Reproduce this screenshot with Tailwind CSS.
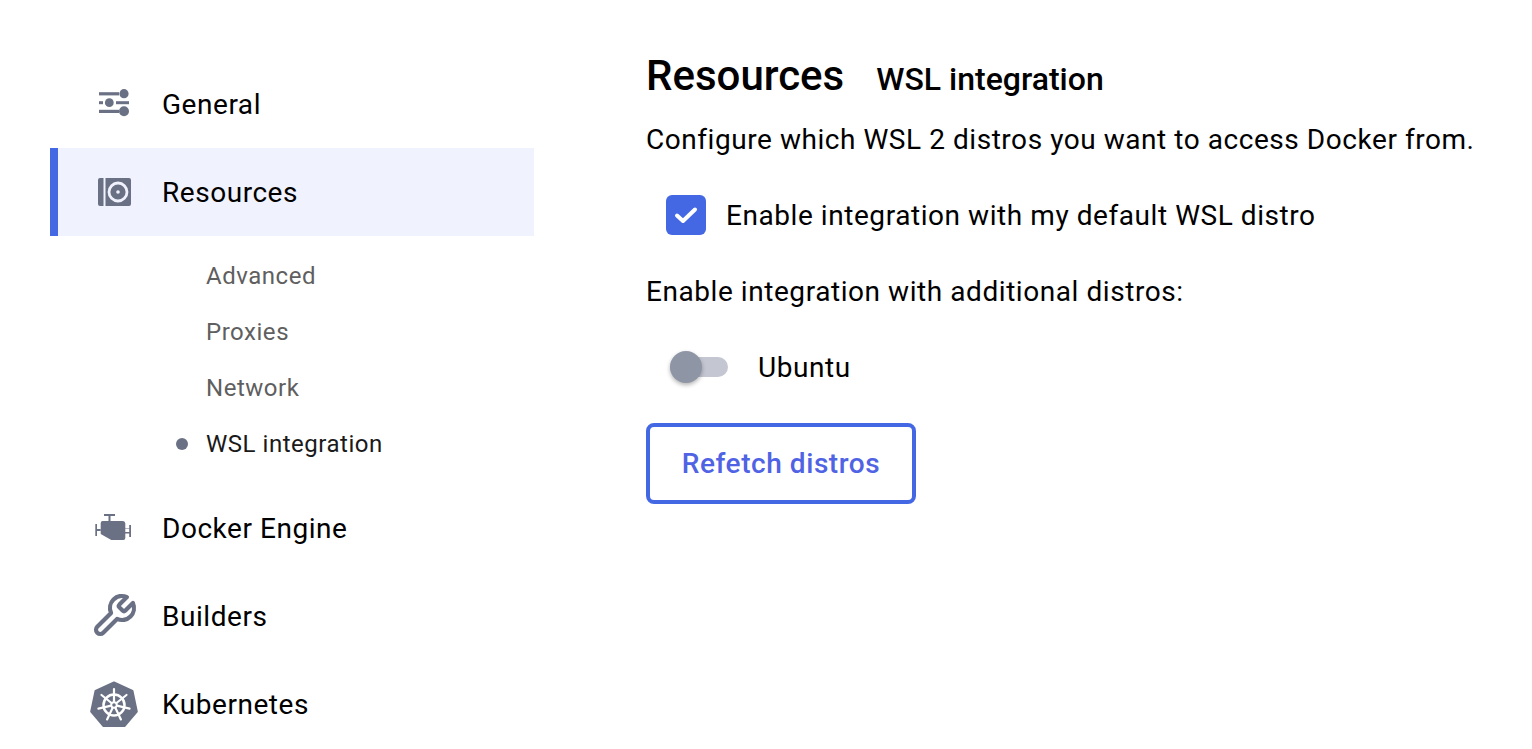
<!DOCTYPE html>
<html><head><meta charset="utf-8">
<script src="https://cdn.jsdelivr.net/npm/@tailwindcss/browser@4"></script>
</head>
<body class="m-0 bg-white overflow-hidden">
<div class="flex h-[749px] w-[1532px] overflow-hidden font-['Roboto',sans-serif] text-black">
  <nav class="ml-[50px] w-[484px] pt-[60px] shrink-0 text-[28px] tracking-[0.54px]">
    <div class="flex items-center h-[88px] pl-[8px]">
      <div class="w-[104px] pl-[32px]">
      <svg class="w-[48px] h-[48px]" viewBox="0 0 48 48" fill="#6b7185"><rect x="9" y="12.200" width="20" height="3.200"/><circle cx="34" cy="13.700" r="4.600"/><rect x="9" y="21.200" width="4" height="3"/><circle cx="19.300" cy="22.700" r="4.400"/><rect x="26" y="21.200" width="13" height="3"/><rect x="9" y="29.800" width="20" height="3.200"/><circle cx="34" cy="31.300" r="5"/></svg>
      </div>
      <span class="pt-[2px]">General</span>
    </div>
    <div class="flex items-center h-[88px] bg-[#f0f2fd] border-l-[8px] border-[#4468e4]">
      <div class="w-[104px] pl-[32px]">
      <svg class="w-[48px] h-[48px]" viewBox="0 0 48 48"><path fill="#6b7185" d="M10 10h3.500v28H10a2 2 0 0 1-2-2V12a2 2 0 0 1 2-2zM15.500 10H39a2 2 0 0 1 2 2v24a2 2 0 0 1-2 2H15.500z"/><circle cx="28" cy="24" r="9" fill="none" stroke="#f0f2fd" stroke-width="2.800"/><circle cx="28" cy="24" r="1.800" fill="#f0f2fd"/></svg>
      </div>
      <span class="pt-[2px]">Resources</span>
    </div>
    <ul class="mt-[12px] mb-[12px] text-[24px] tracking-[0.53px] text-[#5f5f5f]">
      <li class="flex items-center h-[56px] pl-[156px]">Advanced</li>
      <li class="flex items-center h-[56px] pl-[156px]">Proxies</li>
      <li class="flex items-center h-[56px] pl-[156px]">Network</li>
      <li class="flex items-center h-[56px] pl-[126px] text-[#1a1a1a]"><span class="w-[12px] h-[12px] rounded-full bg-[#6b7185] mr-[18px]"></span>WSL integration</li>
    </ul>
    <div class="flex items-center h-[88px] pl-[8px]">
      <div class="w-[104px] pl-[32px]">
      <svg class="w-[48px] h-[48px]" viewBox="0 0 48 48" fill="#6b7185"><path d="M14 10h11v2h-4.500v5h-2v-5H14z"/><path d="M10.700 19a2 2 0 0 1 2-2h20a2.500 2.500 0 0 1 2.600 2.500V34a2 2 0 0 1-2 2H21.300l-10.600-6z"/><path d="M5.300 20H7v5h3.700v2H7v5H5.300zM35 24.500h4.200V21H41v12h-1.800v-3.500H35v-1.600h4.200v-2.800H35z"/></svg>
      </div>
      <span class="pt-[2px]">Docker Engine</span>
    </div>
    <div class="flex items-center h-[88px] pl-[8px]">
      <div class="w-[104px] pl-[32px]">
      <svg class="w-[48px] h-[48px]" viewBox="0 0 24 24" fill="none" stroke="#6b7185" stroke-width="2.100" stroke-linecap="round" stroke-linejoin="round"><path d="M14.700 6.300a1 1 0 0 0 0 1.400l1.600 1.600a1 1 0 0 0 1.400 0l3.770-3.770a6 6 0 0 1-7.940 7.940l-6.910 6.910a2.120 2.120 0 0 1-3-3l6.910-6.910a6 6 0 0 1 7.940-7.940l-3.760 3.760z"/></svg>
      </div>
      <span class="pt-[2px]">Builders</span>
    </div>
    <div class="flex items-center h-[88px] pl-[8px]">
      <div class="w-[104px] pl-[32px]">
      <svg class="w-[48px] h-[48px] overflow-visible" viewBox="0 0 48 48"><path fill="#6b7185" stroke="#6b7185" stroke-width="2" stroke-linejoin="round" d="M24 2.500L42.500 11 46.800 31.500 34.500 46H13.500L1.200 31.500 5.500 11z"/><g fill="none" stroke="#fff"><circle cx="24" cy="25" r="10.500" stroke-width="2.500"/><circle cx="24" cy="25" r="2.800" stroke-width="2"/><g stroke-width="2.200" stroke-linecap="round"><path d="M24 9V21M36.500 15L27.100 22.500M11.500 15L20.900 22.500M39.600 28.600L27.900 25.900M8.400 28.600L20.100 25.900M30.900 39.400L25.700 28.600M17.100 39.400L22.300 28.600"/></g></g></svg>
      </div>
      <span class="pt-[2px]">Kubernetes</span>
    </div>
  </nav>
  <main class="ml-[112px] flex-1 pt-[50px]">
    <div class="flex items-baseline h-[52px]">
      <h1 class="text-[42px] font-medium leading-[52px]">Resources</h1>
      <h2 class="ml-[32px] text-[32px] font-medium">WSL integration</h2>
    </div>
    <p class="mt-[17px] h-[40px] pt-[1px] text-[28px] leading-[40px] tracking-[0.55px]">Configure which WSL 2 distros you want to access Docker from.</p>
    <label class="mt-[36px] ml-[20px] flex items-center h-[40px] text-[28px] tracking-[0.56px]">
      <span class="w-[40px] h-[40px] rounded-[6px] bg-[#4468e4] flex items-center justify-center mr-[20px]">
        <svg class="w-[24px] h-[24px]" viewBox="0 0 24 24" fill="none" stroke="#fff" stroke-width="4" stroke-linecap="round" stroke-linejoin="round"><path d="M3 12.500l6 5.500L21 6.500"/></svg>
      </span>
      <span class="pt-[2px]">Enable integration with my default WSL distro</span>
    </label>
    <p class="mt-[36px] h-[40px] pt-[1px] text-[28px] leading-[40px] tracking-[0.56px]">Enable integration with additional distros:</p>
    <label class="mt-[36px] ml-[24px] flex items-center h-[40px] text-[28px] tracking-[0.56px]">
      <span class="relative w-[58px] h-[20px] rounded-full bg-[#c4c7d2] mr-[30px]">
        <span class="absolute left-0 -top-[6px] w-[32px] h-[32px] rounded-full bg-[#8e95a5] shadow-[0_2px_4px_rgba(0,0,0,0.3)]"></span>
      </span>
      <span class="pt-[2px]">Ubuntu</span>
    </label>
    <button class="mt-[36px] w-[270px] h-[81px] rounded-[8px] border-[4px] border-[#4468e4] bg-white text-[#4f63e4] text-[28px] font-medium tracking-[0.56px]">Refetch distros</button>
  </main>
</div>
</body></html>
